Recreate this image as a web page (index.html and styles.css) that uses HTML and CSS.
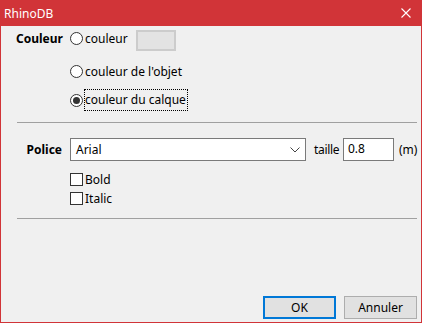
FILE: index.html
```html
<!DOCTYPE html>
<html lang="fr">
<head>
    <meta charset="UTF-8">
    <title>RhinoDB</title>
    <link rel="stylesheet" href="styles.css">
</head>
<body>
    <div class="window">
        <div class="titlebar">
            <span class="title">RhinoDB</span>
            <svg class="close" width="10" height="10" viewBox="0 0 10 10">
                <path d="M0.5 0.5 L9.5 9.5 M9.5 0.5 L0.5 9.5" stroke="#fff" stroke-width="1.1" fill="none"/>
            </svg>
        </div>

        <div class="content">
            <div class="section color-section">
                <div class="label">Couleur</div>
                <div class="options">
                    <div class="option first">
                        <span class="radio"></span>
                        <span class="text short">couleur</span>
                        <span class="swatch"></span>
                    </div>
                    <div class="option second">
                        <span class="radio"></span>
                        <span class="text">couleur de l'objet</span>
                    </div>
                    <div class="option third">
                        <span class="radio checked"></span>
                        <span class="text focus">couleur du calque</span>
                    </div>
                </div>
            </div>

            <div class="sep"></div>

            <div class="section font-section">
                <div class="label police">Police</div>
                <div class="fields">
                    <div class="font-row">
                        <div class="select">
                            <span>Arial</span>
                            <svg width="10" height="6" viewBox="0 0 10 6">
                                <path d="M0.5 0.5 L5 5 L9.5 0.5" stroke="#444" stroke-width="1" fill="none"/>
                            </svg>
                        </div>
                        <span class="taille">taille</span>
                        <div class="input">0.8</div>
                        <span class="unit">(m)</span>
                    </div>
                    <div class="check-row first">
                        <span class="checkbox"></span>
                        <span class="text">Bold</span>
                    </div>
                    <div class="check-row">
                        <span class="checkbox"></span>
                        <span class="text">Italic</span>
                    </div>
                </div>
            </div>

            <div class="sep second"></div>

            <div class="buttons">
                <button class="btn default">OK</button>
                <button class="btn">Annuler</button>
            </div>
        </div>
    </div>
</body>
</html>
```

FILE: styles.css
```css
body {
    margin: 0;
    font-family: "Noto Sans", sans-serif;
    font-size: 12px;
    color: #000;
    background-color: #f0f0f0;
}
.window {
    width: 422px;
    height: 323px;
    box-sizing: border-box;
    border: 1px solid #d13438;
    border-top: none;
    display: flex;
    flex-direction: column;
    background-color: #f0f0f0;
}
.titlebar {
    height: 26px;
    margin: 0 -1px;
    background-color: #d13438;
    display: flex;
    align-items: center;
    justify-content: space-between;
    padding: 0 11px 0 4px;
    color: #fff;
}
.title {
    font-size: 12px;
}
.content {
    flex: 1;
    display: flex;
    flex-direction: column;
    padding: 0 4px 3px 15px;
}
.section {
    display: grid;
    grid-template-columns: 46px 1fr;
    column-gap: 8px;
}
.label {
    font-weight: bold;
    text-align: right;
}
.color-section {
    padding-top: 2px;
}
.color-section .label {
    line-height: 20px;
    padding-top: 1px;
}
.option {
    display: flex;
    align-items: center;
    height: 20px;
}
.option.second {
    margin-top: 13px;
}
.option.third {
    margin-top: 9px;
}
.radio {
    width: 11px;
    height: 11px;
    border: 1px solid #333;
    border-radius: 50%;
    background-color: #fff;
    margin-right: 2px;
    position: relative;
}
.radio.checked::after {
    content: "";
    position: absolute;
    left: 2px;
    top: 2px;
    width: 7px;
    height: 7px;
    border-radius: 50%;
    background-color: #333;
}
.short {
    width: 51px;
}
.focus {
    outline: 1px dotted #000;
    outline-offset: 0;
    padding: 1px 1px 2px 0;
}
.swatch {
    align-self: flex-start;
    width: 36px;
    height: 17px;
    margin-top: 2px;
    border: 2px solid #cccccc;
    background-color: #e3e3e3;
}
.sep {
    height: 1px;
    background-color: #a0a0a0;
    margin-top: 12px;
    margin-left: 1px;
}
.font-section {
    margin-top: 15px;
}
.police {
    line-height: 23px;
}
.font-row {
    display: flex;
    align-items: center;
    height: 23px;
}
.select {
    width: 236px;
    height: 23px;
    box-sizing: border-box;
    border: 1px solid #7a7a7a;
    background-color: #fff;
    display: flex;
    align-items: center;
    justify-content: space-between;
    padding: 0 5px 0 5px;
}
.taille {
    width: 29px;
    margin-left: 8px;
    letter-spacing: -0.3px;
    white-space: nowrap;
}
.input {
    width: 51px;
    height: 23px;
    box-sizing: border-box;
    border: 1px solid #7a7a7a;
    background-color: #fff;
    padding-left: 4px;
    line-height: 19px;
}
.unit {
    margin-left: 5px;
}
.check-row {
    display: flex;
    align-items: center;
    height: 16px;
    margin-top: 3px;
}
.check-row.first {
    margin-top: 10px;
}
.checkbox {
    width: 11px;
    height: 11px;
    border: 1px solid #333;
    background-color: #fff;
    margin-right: 2px;
}
.buttons {
    margin-top: auto;
    display: flex;
    justify-content: flex-end;
    gap: 8px;
}
.btn {
    width: 73px;
    height: 23px;
    font-family: inherit;
    font-size: 12px;
    background-color: #e1e1e1;
    border: 1px solid #adadad;
    padding: 0;
    color: #000;
}
.btn.default {
    border: 2px solid #0078d7;
}
```
